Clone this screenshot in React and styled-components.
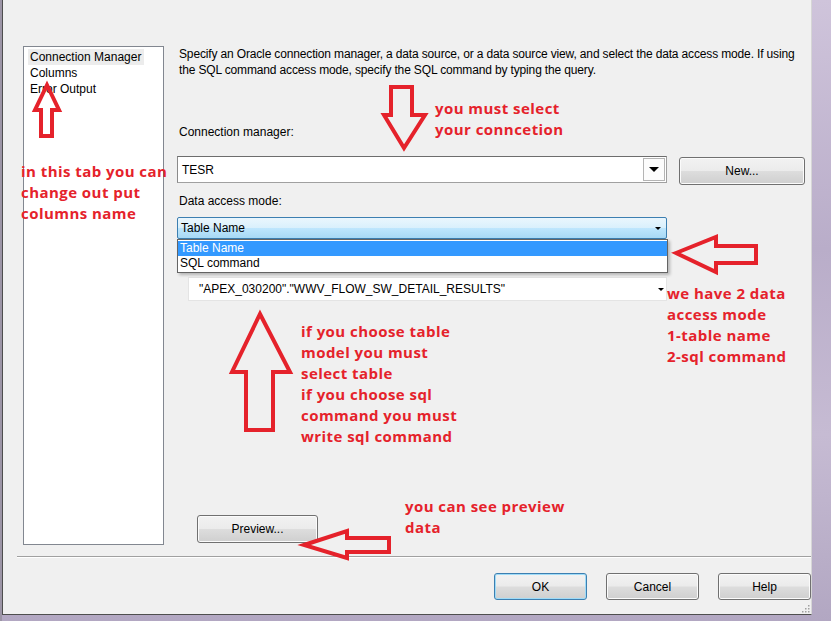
import styled, { createGlobalStyle } from "styled-components";

const GlobalStyle = createGlobalStyle`
  html, body { margin: 0; padding: 0; }
  body { font-family: "Liberation Sans", Arial, sans-serif; }
  * { box-sizing: border-box; }
`;

const RED = "#e5222b";

const Frame = styled.div`
  position: relative;
  width: 831px;
  height: 621px;
  overflow: hidden;
  display: flex;
  align-items: flex-start;
  padding-left: 2px;
  background:
    linear-gradient(90deg, #9c95a6 0, #9c95a6 2px, transparent 2px),
    linear-gradient(180deg, #cfc4db 0%, #b9adc9 40%, #c6bbd3 70%, #b2a7c2 100%);
`;

const Dialog = styled.div`
  position: relative;
  width: 810px;
  height: 615px;
  background: #f0f0f0;
  border-left: 1px solid #4e4e4e;
  border-bottom: 1px solid #4e4e4e;
  border-right: 1px solid #d6d6d6;
  display: flex;
  flex-direction: column;
  font-size: 12px;
  color: #000;
`;

const Body = styled.div`
  display: flex;
  flex-shrink: 0;
  height: 545px;
  padding: 46px 0 0 20px;
`;

const NavList = styled.ul`
  list-style: none;
  margin: 0;
  padding: 2px 0 0 4px;
  width: 141px;
  height: 499px;
  background: #fff;
  border: 1px solid #828790;
`;

const NavItem = styled.li`
  height: 16px;
  line-height: 16px;
  padding-left: 2px;
  width: ${(p) => (p.$active ? "116px" : "auto")};
  background: ${(p) => (p.$active ? "#ececec" : "transparent")};
`;

const Content = styled.div`
  flex: 1;
  margin-left: 13px;
  display: flex;
  flex-direction: column;
`;

const Description = styled.p`
  margin: 0 0 0 2px;
  line-height: 16px;
  font-size: 12px;
  letter-spacing: -0.15px;
  white-space: nowrap;
`;

const Label = styled.div`
  margin: ${(p) => p.$top}px 0 0 2px;
  line-height: 16px;
`;

const ComboRow = styled.div`
  display: flex;
  align-items: flex-start;
  margin-top: 16px;
`;

const SunkenCombo = styled.div`
  width: 490px;
  height: 27px;
  background: #fff;
  border: 1px solid #a0a0a0;
  border-top-color: #6d6d6d;
  border-left-color: #8a8a8a;
  display: flex;
  align-items: center;
  padding-left: 4px;
`;

const ComboText = styled.span`
  flex: 1;
`;

const DropButton = styled.div`
  width: 22px;
  height: 23px;
  margin-right: 1px;
  border: 1px solid #b4b4b4;
  background: #fcfcfc;
  display: flex;
  align-items: center;
  justify-content: center;
`;

const Caret = styled.span`
  width: 0;
  height: 0;
  border-left: ${(p) => p.$size}px solid transparent;
  border-right: ${(p) => p.$size}px solid transparent;
  border-top: ${(p) => p.$size}px solid #000;
  margin-right: ${(p) => p.$right || 0}px;
`;

const Button = styled.button`
  width: ${(p) => p.$w}px;
  height: ${(p) => p.$h || 27}px;
  margin: 0;
  padding: 0;
  font-family: "Liberation Sans", Arial, sans-serif;
  font-size: 12px;
  color: #000;
  border-radius: 3px;
  border: 1px solid ${(p) => (p.$default ? "#3c7fb1" : "#707070")};
  background: linear-gradient(180deg, #f2f2f2 0%, #ebebeb 49%, #dddddd 51%, #cfcfcf 100%);
  box-shadow: inset 0 0 0 1px ${(p) => (p.$default ? "#9fdbf7" : "#fbfbfb")};
`;

const NewButton = styled(Button)`
  margin: 1px 0 0 12px;
`;

const ModeWrap = styled.div`
  position: relative;
  width: 490px;
  margin-top: 8px;
`;

const FocusCombo = styled.div`
  height: 22px;
  border: 1px solid #3c7fb1;
  border-radius: 2px;
  background: linear-gradient(180deg, #eaf6fd 0%, #d9f0fc 49%, #bee6fd 51%, #a7d9f5 100%);
  display: flex;
  align-items: center;
  padding-left: 3px;
`;

const DropList = styled.ul`
  position: absolute;
  top: 100%;
  left: 0;
  width: 491px;
  margin: 0;
  padding: 1px 0;
  list-style: none;
  background: #fff;
  border: 1px solid #646464;
  box-shadow: 2px 2px 3px rgba(0, 0, 0, 0.25);
  z-index: 2;
`;

const DropItem = styled.li`
  height: 15px;
  line-height: 15px;
  padding-left: 2px;
  background: ${(p) => (p.$selected ? "#3399ff" : "#fff")};
  color: ${(p) => (p.$selected ? "#fff" : "#000")};
`;

const TableCombo = styled.div`
  width: 479px;
  height: 24px;
  margin: 38px 0 0 11px;
  background: #fff;
  border: 1px solid #e4e4e4;
  display: flex;
  align-items: center;
  padding-left: 10px;
`;

const PreviewButton = styled(Button)`
  margin: auto 0 2px 20px;
`;

const Separator = styled.hr`
  margin: 11px 0 0 14px;
  height: 0;
  flex-shrink: 0;
  border: none;
  border-top: 1px solid #a0a0a0;
  border-bottom: 1px solid #ffffff;
`;

const Footer = styled.div`
  display: flex;
  justify-content: flex-end;
  gap: 19px;
  margin-top: 15px;
`;

const Grip = styled.svg`
  position: absolute;
  right: 1px;
  bottom: 1px;
`;

const Overlay = styled.div`
  position: absolute;
  inset: 0;
  pointer-events: none;
  z-index: 5;
`;

const Note = styled.div`
  position: absolute;
  left: ${(p) => p.$x}px;
  top: ${(p) => p.$y}px;
  color: ${RED};
  font-family: "Open Sans", "Noto Sans", sans-serif;
  font-weight: 700;
  font-size: 15px;
  letter-spacing: 0.45px;
  line-height: 21px;
  white-space: nowrap;
`;

const arrows = [
  "47,85 59,110 52,110 52,136 41,136 41,110 35,110",
  "391,87 412,87 412,115 425,115 404,148 384,115 391,115",
  "676,253 716,237 716,246 756,246 756,263 716,263 716,272",
  "260,314 290,372 273,372 273,430 246,430 246,372 232,372",
  "304,545 347,531 347,538 389,538 389,552 347,552 347,558",
];

const notes = [
  { x: 435, y: 98, lines: ["you must select", "your conncetion"] },
  { x: 21, y: 161, lines: ["in this tab you can", "change out put", "columns name"] },
  { x: 667, y: 283, lines: ["we have 2 data", "access mode", "1-table name", "2-sql command"] },
  {
    x: 301,
    y: 321,
    lines: [
      "if you choose table",
      "model you must",
      "select table",
      "if you choose sql",
      "command you must",
      "write sql command",
    ],
  },
  { x: 405, y: 496, lines: ["you can see preview", "data"] },
];

export default function App() {
  return (
    <>
      <GlobalStyle />
      <Frame>
        <Dialog>
          <Body>
            <NavList>
              <NavItem $active>Connection Manager</NavItem>
              <NavItem>Columns</NavItem>
              <NavItem>Error Output</NavItem>
            </NavList>
            <Content>
              <Description>
                Specify an Oracle connection manager, a data source, or a data source view, and select the data access mode. If using
                <br />
                the SQL command access mode, specify the SQL command by typing the query.
              </Description>
              <Label $top={46}>Connection manager:</Label>
              <ComboRow>
                <SunkenCombo>
                  <ComboText>TESR</ComboText>
                  <DropButton>
                    <Caret $size={5} />
                  </DropButton>
                </SunkenCombo>
                <NewButton $w={126} $h={28}>New...</NewButton>
              </ComboRow>
              <Label $top={8}>Data access mode:</Label>
              <ModeWrap>
                <FocusCombo>
                  <ComboText>Table Name</ComboText>
                  <Caret $size={3} $right={5} />
                </FocusCombo>
                <DropList>
                  <DropItem $selected>Table Name</DropItem>
                  <DropItem>SQL command</DropItem>
                </DropList>
              </ModeWrap>
              <TableCombo>
                <ComboText>"APEX_030200"."WWV_FLOW_SW_DETAIL_RESULTS"</ComboText>
                <Caret $size={3} $right={2} />
              </TableCombo>
              <PreviewButton $w={121} $h={28}>Preview...</PreviewButton>
            </Content>
          </Body>
          <Separator />
          <Footer>
            <Button $w={93} $default>OK</Button>
            <Button $w={93}>Cancel</Button>
            <Button $w={93}>Help</Button>
          </Footer>
          <Grip width="8" height="8" viewBox="0 0 8 8">
            {[[6, 0], [6, 3], [3, 3], [6, 6], [3, 6], [0, 6]].map(([x, y]) => (
              <rect key={`${x}-${y}`} x={x} y={y} width="1.5" height="1.5" fill="#a0a0a0" />
            ))}
          </Grip>
        </Dialog>
        <Overlay>
          <svg width="831" height="621" style={{ position: "absolute", left: 0, top: 0 }}>
            {arrows.map((pts) => (
              <polygon key={pts} points={pts} fill="none" stroke={RED} strokeWidth="4" strokeLinejoin="miter" />
            ))}
          </svg>
          {notes.map((n) => (
            <Note key={n.lines[0]} $x={n.x} $y={n.y}>
              {n.lines.map((l) => (
                <div key={l}>{l}</div>
              ))}
            </Note>
          ))}
        </Overlay>
      </Frame>
    </>
  );
}
